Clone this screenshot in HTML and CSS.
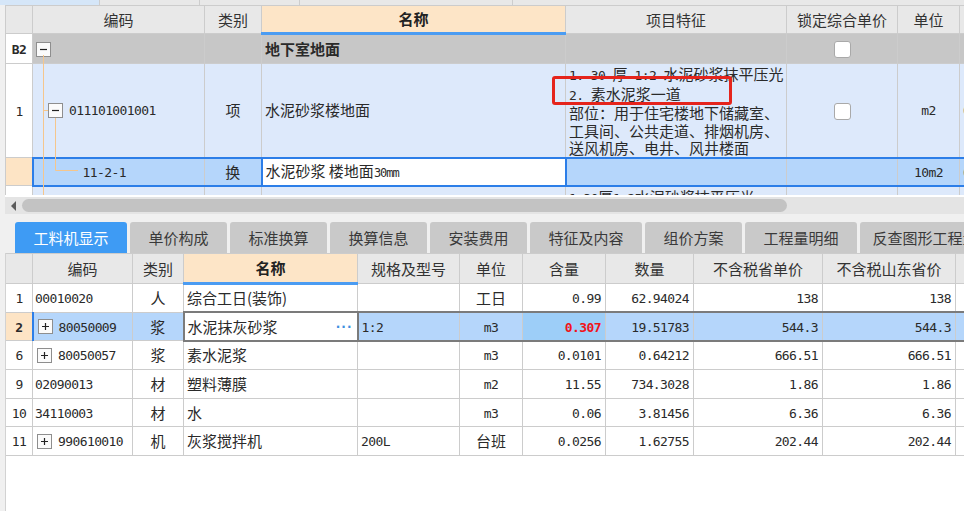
FILE: index.html
```html
<!DOCTYPE html>
<html lang="zh-CN">
<head>
<meta charset="utf-8">
<title>分部分项</title>
<link rel="stylesheet" href="styles.css">
</head>
<body>
<div class="app">
  <div class="topstrip"><span class="seg on"></span><span class="seg"></span><span class="seg"></span><span class="seg wide"></span><span class="seg rest"></span></div>

  <div class="upper">
    <table class="grid grid-top">
      <colgroup>
        <col class="t-rn"><col class="t-code"><col class="t-type"><col class="t-name"><col class="t-feat"><col class="t-lock"><col class="t-unit"><col class="t-more">
      </colgroup>
      <thead>
        <tr><th></th><th>编码</th><th>类别</th><th class="hl">名称</th><th>项目特征</th><th>锁定综合单价</th><th>单位</th><th></th></tr>
      </thead>
      <tbody>
        <tr class="r-group">
          <td class="rn"><span class="n b">B2</span></td>
          <td class="code c-b2"><span class="tog"><svg width="15" height="15" viewBox="0 0 15 15"><path d="M4 7.5h7" stroke="#222" stroke-width="1.2"/></svg></span></td>
          <td></td>
          <td class="b">地下室地面</td>
          <td></td>
          <td class="ctr"><span class="chk"></span></td>
          <td></td><td></td>
        </tr>
        <tr class="r-item">
          <td class="rn"><span class="n">1</span></td>
          <td class="code c-item"><span class="tog"><svg width="15" height="15" viewBox="0 0 15 15"><path d="M4 7.5h7" stroke="#222" stroke-width="1.2"/></svg></span><span class="n">011101001001</span></td>
          <td class="ctr">项</td>
          <td>水泥砂浆楼地面</td>
          <td class="feat">
            <span class="ln"><span class="n">1. 30 </span>厚<span class="n"> 1:2 </span>水泥砂浆抹平压光</span>
            <span class="ln"><span class="n">2. </span>素水泥浆一道</span>
            <span class="ln">部位：用于住宅楼地下储藏室、</span>
            <span class="ln">工具间、公共走道、排烟机房、</span>
            <span class="ln">送风机房、电井、风井楼面</span>
          </td>
          <td class="ctr"><span class="chk"></span></td>
          <td class="ctr"><span class="n">m2</span></td>
          <td><span class="n">0</span></td>
        </tr>
        <tr class="r-sel">
          <td class="rn"></td>
          <td class="code c-sub"><span class="n">11-2-1</span></td>
          <td class="ctr">换</td>
          <td class="edit">水泥砂浆 楼地面<span class="n sm">30mm</span></td>
          <td></td>
          <td></td>
          <td class="ctr"><span class="n">10m2</span></td>
          <td><span class="n">0</span></td>
        </tr>
        <tr class="r-next">
          <td class="rn"></td>
          <td></td><td></td><td></td>
          <td class="feat"><span class="ln"><span class="n">1.30</span>厚<span class="n">1:2</span>水泥砂浆抹平压光</span></td>
          <td></td><td></td><td></td>
        </tr>
      </tbody>
    </table>
    <svg class="tree" width="120" height="190" viewBox="0 0 120 190">
      <path d="M38.5 50V190M38 105.5H43M50.5 113V165.5H73" stroke="#f5c68c" stroke-width="1" fill="none"/>
    </svg>
    <div class="mark"></div>
  </div>

  <div class="hscroll"><span class="arrow"></span><span class="thumb"></span></div>

  <div class="tabs">
    <span class="tab on w2">工料机显示</span>
    <span class="tab">单价构成</span>
    <span class="tab">标准换算</span>
    <span class="tab">换算信息</span>
    <span class="tab">安装费用</span>
    <span class="tab w2">特征及内容</span>
    <span class="tab">组价方案</span>
    <span class="tab w2">工程量明细</span>
    <span class="tab w3">反查图形工程量</span>
  </div>

  <div class="lower">
    <table class="grid grid-bot">
      <colgroup>
        <col class="b-rn"><col class="b-code"><col class="b-type"><col class="b-name"><col class="b-spec"><col class="b-unit"><col class="b-qty"><col class="b-num"><col class="b-p1"><col class="b-p2"><col class="b-more">
      </colgroup>
      <thead>
        <tr><th></th><th>编码</th><th>类别</th><th class="hl">名称</th><th>规格及型号</th><th>单位</th><th>含量</th><th>数量</th><th>不含税省单价</th><th>不含税山东省价</th><th></th></tr>
      </thead>
      <tbody>
        <tr>
          <td class="rn"><span class="n">1</span></td>
          <td class="code"><span class="n">00010020</span></td>
          <td class="ctr">人</td>
          <td>综合工日(装饰)</td>
          <td></td>
          <td class="ctr">工日</td>
          <td class="num"><span class="n">0.99</span></td>
          <td class="num"><span class="n">62.94024</span></td>
          <td class="num"><span class="n">138</span></td>
          <td class="num"><span class="n">138</span></td>
          <td></td>
        </tr>
        <tr class="sel">
          <td class="rn"><span class="n b">2</span></td>
          <td class="code first"><span class="tog"><svg width="15" height="15" viewBox="0 0 15 15"><path d="M4 7.5h7M7.5 4v7" stroke="#222" stroke-width="1.2"/></svg></span><span class="n">80050009</span></td>
          <td class="ctr lead">浆</td>
          <td class="edit"><span class="editrow"><span>水泥抹灰砂浆</span><span class="dots">···</span></span></td>
          <td class="hot"><span class="n">1:2</span></td>
          <td class="ctr hot"><span class="n">m3</span></td>
          <td class="num hot cur"><span class="n red">0.307</span></td>
          <td class="num hot"><span class="n">19.51783</span></td>
          <td class="num hot"><span class="n">544.3</span></td>
          <td class="num hot"><span class="n">544.3</span></td>
          <td class="hot"></td>
        </tr>
        <tr>
          <td class="rn"><span class="n">6</span></td>
          <td class="code"><span class="tog"><svg width="15" height="15" viewBox="0 0 15 15"><path d="M4 7.5h7M7.5 4v7" stroke="#222" stroke-width="1.2"/></svg></span><span class="n">80050057</span></td>
          <td class="ctr">浆</td>
          <td>素水泥浆</td>
          <td></td>
          <td class="ctr"><span class="n">m3</span></td>
          <td class="num"><span class="n">0.0101</span></td>
          <td class="num"><span class="n">0.64212</span></td>
          <td class="num"><span class="n">666.51</span></td>
          <td class="num"><span class="n">666.51</span></td>
          <td></td>
        </tr>
        <tr>
          <td class="rn"><span class="n">9</span></td>
          <td class="code"><span class="n">02090013</span></td>
          <td class="ctr">材</td>
          <td>塑料薄膜</td>
          <td></td>
          <td class="ctr"><span class="n">m2</span></td>
          <td class="num"><span class="n">11.55</span></td>
          <td class="num"><span class="n">734.3028</span></td>
          <td class="num"><span class="n">1.86</span></td>
          <td class="num"><span class="n">1.86</span></td>
          <td></td>
        </tr>
        <tr>
          <td class="rn"><span class="n">10</span></td>
          <td class="code"><span class="n">34110003</span></td>
          <td class="ctr">材</td>
          <td>水</td>
          <td></td>
          <td class="ctr"><span class="n">m3</span></td>
          <td class="num"><span class="n">0.06</span></td>
          <td class="num"><span class="n">3.81456</span></td>
          <td class="num"><span class="n">6.36</span></td>
          <td class="num"><span class="n">6.36</span></td>
          <td></td>
        </tr>
        <tr>
          <td class="rn"><span class="n">11</span></td>
          <td class="code"><span class="tog"><svg width="15" height="15" viewBox="0 0 15 15"><path d="M4 7.5h7M7.5 4v7" stroke="#222" stroke-width="1.2"/></svg></span><span class="n">990610010</span></td>
          <td class="ctr">机</td>
          <td>灰浆搅拌机</td>
          <td><span class="n">200L</span></td>
          <td class="ctr">台班</td>
          <td class="num"><span class="n">0.0256</span></td>
          <td class="num"><span class="n">1.62755</span></td>
          <td class="num"><span class="n">202.44</span></td>
          <td class="num"><span class="n">202.44</span></td>
          <td></td>
        </tr>
      </tbody>
    </table>
  </div>
</div>
</body>
</html>
```

FILE: styles.css
```css
* { box-sizing: border-box; }

body {
  margin: 0;
  background: #f0f0f0;
  font-family: "Noto Sans CJK SC", "Noto Sans", sans-serif;
  font-size: 15px;
  color: #2a2a2a;
}

.app {
  width: 964px;
  height: 511px;
  overflow: hidden;
}

/* strip of the tab bar above, cut off */
.topstrip { display: flex; height: 5px; }
.seg { width: 100px; background: #e8e8e8; border-right: 1px solid #cdcdcd; }
.seg.on { background: #d5e6f8; }
.seg.wide { width: 213px; }
.seg.rest { flex: 1; border-right: 0; }

/* generic grid */
.grid {
  border-collapse: collapse;
  table-layout: fixed;
}
.grid th,
.grid td {
  border: 1px solid #cccccc;
  padding: 0 3px;
  white-space: nowrap;
  overflow: hidden;
  line-height: 18px;
  text-align: left;
}
.grid th {
  background: #e8e8e8;
  font-weight: normal;
  text-align: center;
  color: #333;
}
.grid th.hl {
  background: #fde5c7;
  font-weight: bold;
  color: #222;
  border-bottom: 3px solid #4b9cf2;
}
.grid td.rn { text-align: center; padding: 0; background: #fff; }
.grid td.ctr { text-align: center; }
.grid td.num { text-align: right; padding-right: 4px; }
.b { font-weight: bold; }

.n {
  font-family: "DejaVu Sans Mono", "Liberation Mono", monospace;
  font-size: 13px;
  letter-spacing: -0.6px;
}
.n.sm { font-size: 12px; letter-spacing: -1px; }
.red { color: #f0141a; font-weight: bold; }

.tog {
  display: inline-block;
  width: 15px;
  height: 15px;
  border: 1px solid #8e8e8e;
  background: #fbfbfb;
  vertical-align: middle;
  margin-right: 6px;
  position: relative;
  top: -1px;
}
.tog svg { display: block; margin: -1px; }

.chk {
  display: inline-block;
  width: 17px;
  height: 17px;
  border: 1px solid #a9a9a9;
  border-radius: 3px;
  background: #fff;
  vertical-align: middle;
}

/* ---------- upper grid ---------- */
.upper {
  position: relative;
  margin-left: 5px;
  height: 190px;
  overflow: hidden;
  background: #fff;
}
.grid-top { width: 1014px; }
.t-rn { width: 27px; }
.t-code { width: 172px; }
.t-type { width: 57px; }
.t-name { width: 304px; }
.t-feat { width: 221px; }
.t-lock { width: 111px; }
.t-unit { width: 62px; }
.t-more { width: 60px; }

.grid-top thead th { height: 28px; }

.r-group td { background: #c7c7c7; height: 30px; }
.r-group td.rn { background: #fff; }
.grid td.c-b2 { padding-left: 3px; }

.r-item td { background: #dde9fb; height: 94px; }
.r-item td.rn { background: #fff; }
.grid td.c-item { padding-left: 15px; }

.grid td.feat {
  vertical-align: top;
  padding-top: 1px;
  white-space: normal;
}
.ln { display: block; line-height: 17.5px; white-space: nowrap; }

.r-sel td {
  background: #b5d6fb;
  height: 28px;
  border-top: 2px solid #2c7ee8;
  border-bottom: 2px solid #2c7ee8;
}
.r-sel td.rn {
  background: #fde4c5;
  border-top: 1px solid #cccccc;
  border-bottom: 1px solid #cccccc;
}
.r-sel td.code { border-left: 2px solid #2c7ee8; padding-left: 49px; }
.r-sel td.edit { background: #fff; border: 2px solid #2c7ee8; }

.r-next td { background: #dde9fb; height: 28px; }
.r-next td.rn { background: #fff; }

.tree {
  position: absolute;
  left: 0;
  top: 0;
  pointer-events: none;
}

.mark {
  position: absolute;
  left: 547px;
  top: 71px;
  width: 180px;
  height: 29px;
  border: 3px solid #e5241c;
  border-radius: 3px;
}

/* ---------- scrollbar ---------- */
.hscroll {
  margin-left: 5px;
  height: 19px;
  border-top: 2px solid #fff;
  background: #e4e4e4;
  display: flex;
  align-items: center;
  padding-left: 6px;
}
.arrow {
  width: 0;
  height: 0;
  border-top: 5px solid transparent;
  border-bottom: 5px solid transparent;
  border-right: 5px solid #5c5c5c;
  margin-right: 6px;
}
.thumb {
  width: 765px;
  height: 13px;
  border-radius: 7px;
  background: #c3c3c3;
}

/* ---------- tabs ---------- */
.tabs {
  display: flex;
  gap: 3px;
  height: 39px;
  padding: 8px 0 0 15px;
  overflow: hidden;
}
.tab {
  flex: none;
  width: 97px;
  height: 31px;
  line-height: 31px;
  text-align: center;
  background: #c9c9c9;
  border-radius: 3px 3px 0 0;
  color: #3a3a3a;
}
.tab.w2 { width: 112px; }
.tab.w3 { width: 130px; }
.tab.on { background: #3e9bf4; color: #fff; }

/* ---------- lower grid ---------- */
.lower {
  margin-left: 5px;
  height: 258px;
  overflow: hidden;
  background: #fff;
  border-left: 1px solid #d2d2d2;
}
.grid-bot { width: 1010px; margin-left: -1px; }
.b-rn { width: 27px; }
.b-code { width: 100px; }
.b-type { width: 51px; }
.b-name { width: 174px; }
.b-spec { width: 102px; }
.b-unit { width: 63px; }
.b-qty { width: 83px; }
.b-num { width: 88px; }
.b-p1 { width: 129px; }
.b-p2 { width: 133px; }
.b-more { width: 60px; }

.grid-bot thead th { height: 30px; }
.grid-bot tbody td { height: 28.7px; }
.grid-bot td.code { padding-left: 2px; }
.grid-bot td.code .tog { margin-left: 2px; }

.grid-bot .sel td.rn { background: #fde4c5; }
.grid-bot .sel td.first { background: #b5d6fb; border-left: 2px solid #2c7ee8; }
.grid-bot .sel td.lead { background: #b5d6fb; }
.grid-bot .sel td.edit { background: #fff; border: 2px solid #7b7b7b; padding-right: 4px; }
.grid-bot .sel td.hot {
  background: #b5d6fb;
  border-top: 2px solid #7b7b7b;
  border-bottom: 2px solid #7b7b7b;
}
.grid-bot .sel td.cur { background: #9dcef8; }
.editrow { display: flex; justify-content: space-between; align-items: center; }
.dots {
  color: #3d8fe0;
  font-family: "DejaVu Sans", sans-serif;
  font-size: 12px;
  letter-spacing: 1px;
  font-weight: bold;
}
```
